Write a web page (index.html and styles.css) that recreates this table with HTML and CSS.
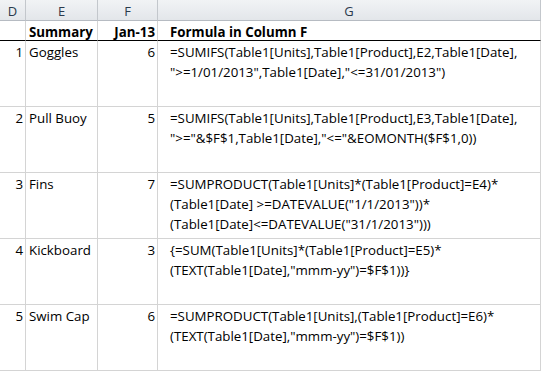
FILE: index.html
```html
<!DOCTYPE html>
<html>
<head>
<meta charset="utf-8">
<link rel="stylesheet" href="styles.css">
</head>
<body>
<div class="sheet">
  <div class="colhead">D</div>
  <div class="colhead">E</div>
  <div class="colhead">F</div>
  <div class="colhead">G</div>

  <div class="cell hdr"></div>
  <div class="cell hdr bold">Summary</div>
  <div class="cell hdr bold num">Jan-13</div>
  <div class="cell hdr bold formula">Formula in Column F</div>

  <div class="cell num">1</div>
  <div class="cell">Goggles</div>
  <div class="cell num">6</div>
  <div class="cell formula">=SUMIFS(Table1[Units],Table1[Product],E2,Table1[Date],<br>"&gt;=1/01/2013",Table1[Date],"&lt;=31/01/2013")</div>

  <div class="cell num">2</div>
  <div class="cell">Pull Buoy</div>
  <div class="cell num">5</div>
  <div class="cell formula">=SUMIFS(Table1[Units],Table1[Product],E3,Table1[Date],<br>"&gt;="&amp;$F$1,Table1[Date],"&lt;="&amp;EOMONTH($F$1,0))</div>

  <div class="cell num">3</div>
  <div class="cell">Fins</div>
  <div class="cell num">7</div>
  <div class="cell formula">=SUMPRODUCT(Table1[Units]*(Table1[Product]=E4)*<br>(Table1[Date] &gt;=DATEVALUE("1/1/2013"))*<br>(Table1[Date]&lt;=DATEVALUE("31/1/2013")))</div>

  <div class="cell num">4</div>
  <div class="cell">Kickboard</div>
  <div class="cell num">3</div>
  <div class="cell formula">{=SUM(Table1[Units]*(Table1[Product]=E5)*<br>(TEXT(Table1[Date],"mmm-yy")=$F$1))}</div>

  <div class="cell num">5</div>
  <div class="cell">Swim Cap</div>
  <div class="cell num">6</div>
  <div class="cell formula">=SUMPRODUCT(Table1[Units],(Table1[Product]=E6)*<br>(TEXT(Table1[Date],"mmm-yy")=$F$1))</div>
</div>
</body>
</html>
```
FILE: styles.css
```css
html, body {
  margin: 0;
  padding: 0;
  background: #ffffff;
}
.sheet {
  display: grid;
  grid-template-columns: 26px 72px 60px 383px;
  grid-template-rows: 21px 20px repeat(5, 66px);
  font-family: "Open Sans", "Liberation Sans", sans-serif;
  font-size: 13.3px;
  color: #000;
  width: 541px;
}
.colhead {
  background: linear-gradient(#f1f3f5, #e3e6ea);
  border-right: 1px solid #c3c7cc;
  border-bottom: 1px solid #b6bbc2;
  display: flex;
  align-items: center;
  justify-content: center;
  padding-top: 2px;
  font-size: 13px;
  color: #2a3a4c;
}
.cell {
  border-right: 1px solid #d4d4d4;
  border-bottom: 1px solid #d4d4d4;
  padding: 1px 2px 0 3px;
  line-height: 20px;
  white-space: nowrap;
  overflow: hidden;
}
.hdr {
  border-bottom: 1px solid #000;
}
.bold {
  font-weight: bold;
}
.num {
  text-align: right;
}
.formula {
  padding-left: 12px;
}
```
